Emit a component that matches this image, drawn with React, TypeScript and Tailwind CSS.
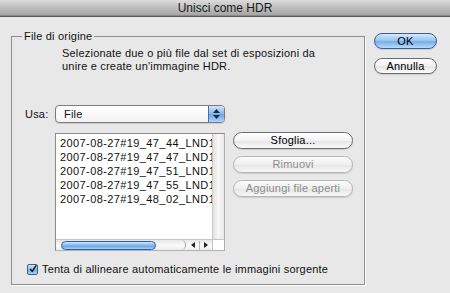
import type { FC, ReactNode } from 'react';

const files = [
  '2007-08-27#19_47_44_LND1',
  '2007-08-27#19_47_47_LND1',
  '2007-08-27#19_47_51_LND1',
  '2007-08-27#19_47_55_LND1',
  '2007-08-27#19_48_02_LND1',
];

interface AquaButtonProps {
  children: ReactNode;
  variant?: 'default' | 'primary' | 'disabled';
  className?: string;
}

const AquaButton: FC<AquaButtonProps> = ({ children, variant = 'default', className = '' }) => {
  const look =
    variant === 'primary'
      ? 'border-[#3d5f93] bg-[linear-gradient(#d6e8fb,#9cc6f1_45%,#74aee9_55%,#b8dcfc)] text-black'
      : variant === 'disabled'
        ? 'border-[#b6b6b6] bg-[linear-gradient(#fbfbfb,#efefef_50%,#e6e6e6_51%,#f6f6f6)] text-[#8c8c8c]'
        : 'border-[#6c6c6c] bg-[linear-gradient(#ffffff,#f2f2f2_50%,#e4e4e4_51%,#fbfbfb)] text-black';

  return (
    <div
      className={`flex items-center justify-center rounded-full border leading-none shadow-[0_1px_1px_rgba(0,0,0,0.12)] ${look} ${className}`}
    >
      {children}
    </div>
  );
};

const SelectBox: FC = () => (
  <div className="flex h-[18px] w-[170px] items-stretch rounded-[4px] border border-[#7c7c7c] bg-[linear-gradient(#ffffff,#f4f4f4)] shadow-[0_1px_1px_rgba(0,0,0,0.12)]">
    <span className="flex flex-1 items-center pl-[8px] leading-none">File</span>
    <div className="flex w-[16px] flex-col items-center justify-center gap-[2px] rounded-r-[3px] border-l border-[#4d6f9f] bg-[linear-gradient(#cfe4fa,#86b8ec_50%,#6aa5e6_51%,#acd4fb)]">
      <svg width="7" height="4" viewBox="0 0 7 4">
        <path d="M0 4 L3.5 0 L7 4 Z" fill="#1c2a3a" />
      </svg>
      <svg width="7" height="4" viewBox="0 0 7 4">
        <path d="M0 0 L3.5 4 L7 0 Z" fill="#1c2a3a" />
      </svg>
    </div>
  </div>
);

const FileList: FC = () => (
  <div className="flex h-[118px] w-[170px] flex-col border border-[#8a8a8a] border-b-[#b0b0b0] border-r-[#b0b0b0] bg-white">
    <div className="flex min-h-0 flex-1">
      <div className="flex-1 overflow-hidden whitespace-nowrap pl-[4px] pt-[2px] leading-[14px] tracking-[0.4px]">
        {files.map((f) => (
          <div key={f}>{f}</div>
        ))}
      </div>
      <div className="w-[12px] border-l border-[#c8c8c8] bg-[linear-gradient(90deg,#e2e2e2,#f7f7f7_50%,#e9e9e9)]" />
    </div>
    <div className="flex h-[11px] items-stretch border-t border-[#c6c6c6] bg-[linear-gradient(#e6e6e6,#fafafa_50%,#eeeeee)]">
      <div className="flex w-[130px] items-center rounded-r-full border-r border-[#a8a8a8] pl-[5px]">
        <div className="h-[9px] w-[95px] rounded-full border border-[#2f5fa3] bg-[linear-gradient(#d2e6fb,#7fb4ec_50%,#5b9be2_51%,#a9d3fb)]" />
      </div>
      <div className="flex flex-1 items-center justify-center gap-[4px]">
        <svg width="4" height="6" viewBox="0 0 4 6">
          <path d="M4 0 L0 3 L4 6 Z" fill="#222" />
        </svg>
        <div className="h-[9px] w-px bg-[#b8b8b8]" />
        <svg width="4" height="6" viewBox="0 0 4 6">
          <path d="M0 0 L4 3 L0 6 Z" fill="#222" />
        </svg>
      </div>
      <div className="w-[12px] border-l border-[#c8c8c8] bg-white" />
    </div>
  </div>
);

const CheckBox: FC = () => (
  <div className="flex h-[11px] w-[11px] items-center justify-center rounded-[2px] border border-[#3f5f8f] bg-[linear-gradient(#cfe4fa,#86b8ec_50%,#6aa5e6_51%,#acd4fb)]">
    <svg width="10" height="10" viewBox="0 0 10 10" className="-mt-[2px] ml-[1px]">
      <path d="M1.5 5 L4 8 L9 0.5" fill="none" stroke="#111" strokeWidth="1.8" />
    </svg>
  </div>
);

const App: FC = () => {
  return (
    <div className="h-[293px] w-[450px] overflow-hidden bg-[#e8e8e8] font-['Liberation_Sans',Arial,sans-serif] text-[11px] tracking-[0.2px] text-[#111]">
      <div className="flex h-[17px] items-center justify-center border-b border-[#5a5a5a] bg-[linear-gradient(#dcdcdc,#bdbdbd_50%,#a3a3a3)] text-[12px] tracking-normal text-[#1a1a1a] shadow-[inset_0_-1px_0_#8a8a8a]">
        Unisci come HDR
      </div>

      <div className="flex pl-[11px] pt-[12px]">
        <fieldset className="h-[256px] w-[354px] border border-[#8e8e8e] shadow-[1px_1px_0_#ffffff]">
          <legend className="ml-[10px] px-[2px] leading-[14px]">File di origine</legend>

          <p className="ml-[50px] mt-[4px] leading-[13px]">
            Selezionate due o più file dal set di esposizioni da
            <br />
            unire e create un'immagine HDR.
          </p>

          <div className="mt-[32px] flex items-center">
            <span className="ml-[13px] w-[30px] leading-none">Usa:</span>
            <SelectBox />
          </div>

          <div className="ml-[43px] mt-[10px] flex items-start">
            <FileList />
            <div className="ml-[8px] -mt-[1px] flex w-[120px] flex-col gap-[7px]">
              <AquaButton className="h-[17px]">Sfoglia...</AquaButton>
              <AquaButton variant="disabled" className="h-[17px]">Rimuovi</AquaButton>
              <AquaButton variant="disabled" className="h-[17px]">Aggiungi file aperti</AquaButton>
            </div>
          </div>

          <div className="ml-[15px] mt-[13px] flex items-center gap-[4px]">
            <CheckBox />
            <span className="leading-none">Tenta di allineare automaticamente le immagini sorgente</span>
          </div>
        </fieldset>

        <div className="ml-[9px] mt-[4px] flex w-[63px] flex-col gap-[9px]">
          <AquaButton variant="primary" className="h-[16px]">OK</AquaButton>
          <AquaButton className="h-[16px]">Annulla</AquaButton>
        </div>
      </div>
    </div>
  );
};

export default App;
